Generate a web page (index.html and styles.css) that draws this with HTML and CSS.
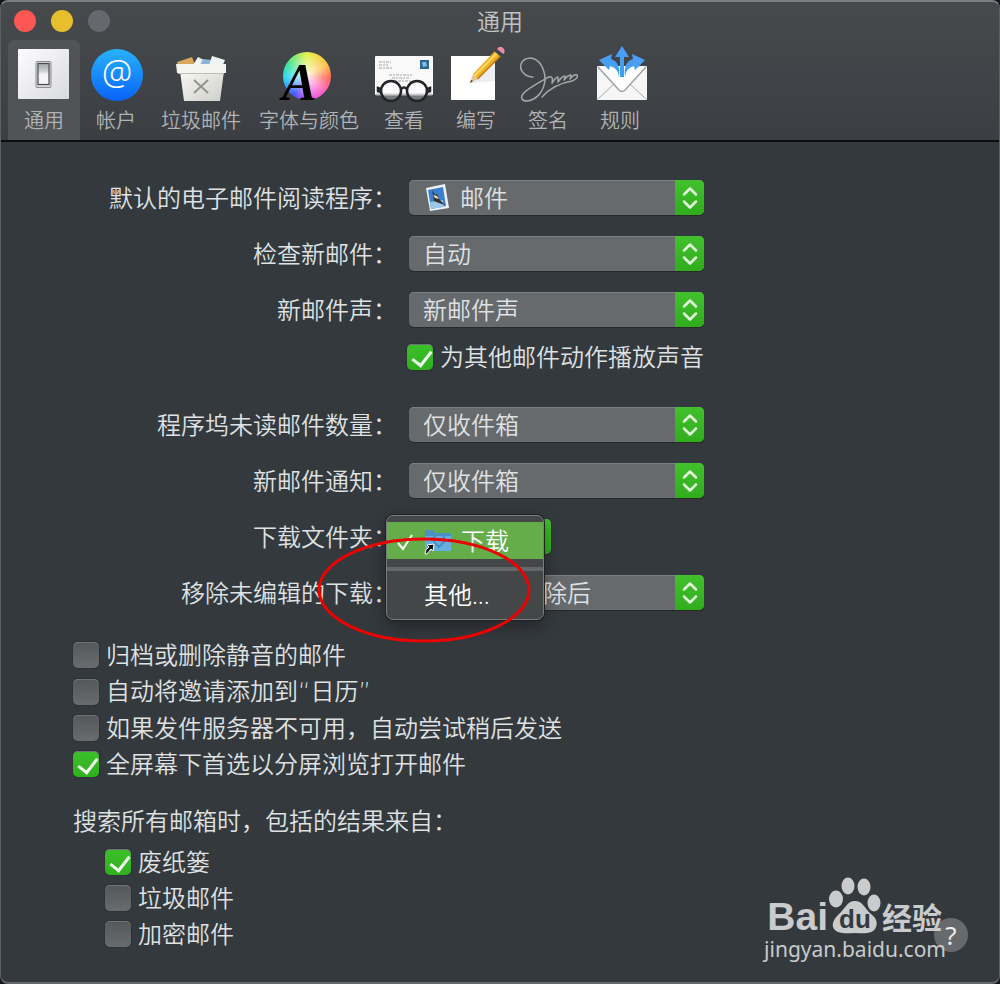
FILE: index.html
```
<!DOCTYPE html>
<html lang="zh-CN">
<head>
  <meta charset="UTF-8">
  <meta name="viewport" content="width=device-width, initial-scale=1.0">
  <title>通用</title>
  <link rel="stylesheet" href="styles.css">
</head>
<body>
  <svg width="0" height="0" class="defs" aria-hidden="true">
    <symbol id="arrows" viewBox="0 0 29 35">
      <path d="M9 14.500l6-6 6 6M9 21.500l6 6 6-6" fill="none" stroke="#e4f8df" stroke-width="2.500" stroke-linecap="round" stroke-linejoin="round"/>
    </symbol>
  </svg>

  <div class="window">
    <header>
      <div class="titlebar">
        <div class="lights">
          <button class="light close" aria-label="关闭"></button>
          <button class="light minimize" aria-label="最小化"></button>
          <button class="light zoom" aria-label="缩放" disabled></button>
        </div>
        <h1>通用</h1>
      </div>

      <nav class="toolbar">
        <button class="tab active">
          <svg class="icon" viewBox="0 0 60 56">
            <defs>
              <linearGradient id="plate" x2="1" y2="1"><stop offset="0" stop-color="#fdfdfe"/><stop offset="1" stop-color="#d9dadf"/></linearGradient>
              <linearGradient id="rocker" x2="0" y2="1"><stop offset="0" stop-color="#a4a6ab"/><stop offset=".4" stop-color="#d3d4d8"/><stop offset=".5" stop-color="#f4f4f6"/></linearGradient>
            </defs>
            <rect x="4" y="3" width="51" height="50" rx="1" fill="url(#plate)"/>
            <rect x="22" y="15.500" width="15" height="26" rx="1" fill="#d5d6da" stroke="#8d8f94"/>
            <rect x="24" y="17.500" width="11" height="21" fill="url(#rocker)" stroke="#4c4d51" stroke-width="1.200"/>
          </svg>
          <span>通用</span>
        </button>
        <button class="tab">
          <svg class="icon" viewBox="0 0 60 56">
            <defs><linearGradient id="blue" x2="0" y2="1"><stop offset="0" stop-color="#26b3fa"/><stop offset="1" stop-color="#0a62fa"/></linearGradient></defs>
            <circle cx="31" cy="29" r="26" fill="url(#blue)"/>
            <text x="31" y="39" class="at">@</text>
          </svg>
          <span>帐户</span>
        </button>
        <button class="tab">
          <svg class="icon" viewBox="0 0 60 56">
            <defs><linearGradient id="bin" x2="1" y2="1"><stop offset="0" stop-color="#f8f8f4"/><stop offset="1" stop-color="#cfcfca"/></linearGradient></defs>
            <path d="M6 16l15-5 3 8-17 2z" fill="#d7a75c"/>
            <path d="M22 19l5-8 6 3-3 6z" fill="#f5f8f8"/>
            <path d="M29 19l3-6 9 1 1 6z" fill="#8ab4d8"/>
            <path d="M38 19l3-9 13 4-3 7z" fill="#eef3f4"/>
            <path d="M9 25h44l-4 30H13z" fill="url(#bin)"/>
            <path d="M5 18h50v9H6z" fill="#f3f3ef"/>
            <path d="M7 27.500h46" stroke="#c1c0b8"/>
            <path d="M23 34l14 13M37 34l-14 13" stroke="#96948c" stroke-width="2"/>
          </svg>
          <span>垃圾邮件</span>
        </button>
        <button class="tab">
          <svg class="icon" viewBox="0 0 60 56">
            <foreignObject x="4" y="6" width="48" height="48"><div class="wheel"></div></foreignObject>
            <text x="3" y="54" class="letter">A</text>
          </svg>
          <span>字体与颜色</span>
        </button>
        <button class="tab">
          <svg class="icon" viewBox="0 0 60 56">
            <rect x="1" y="10" width="58" height="39" rx="1" fill="#f9f9fa"/>
            <path d="M2 48.500h56" stroke="#b5b7ba" stroke-width="2"/>
            <rect x="46" y="14" width="9" height="9" fill="#2c6896"/>
            <path d="M48 16l4 0 1 4-4 1z" fill="#85bde1"/>
            <path d="M5 16h12M5 19h9M5 22h13M15 29h23M18 32h17M17 35h20" stroke="#a0a1a5" stroke-dasharray="3 1 2 1"/>
            <g fill="#ffffff" fill-opacity=".3" stroke="#232427" stroke-width="2.500">
              <circle cx="17" cy="45" r="10"/>
              <circle cx="43" cy="45" r="10"/>
              <path d="M27 43q3-3 6 0M7 43l-3-1v3l3 1M53 43l3-1v3l-3 1" fill="none"/>
            </g>
          </svg>
          <span>查看</span>
        </button>
        <button class="tab">
          <svg class="icon" viewBox="0 0 60 56">
            <rect x="5" y="10" width="44" height="44" fill="#fff"/>
            <path d="M25 37L49 17v18z" fill="#eceef1"/>
            <path d="M24 37l3-9 5 5z" fill="#e5c594"/>
            <path d="M24 37l1-3 2 1z" fill="#333"/>
            <path d="M27 28L49 5l6 5-23 23z" fill="#eeb024"/>
            <path d="M28.500 30L51 7" stroke="#ffd96a" stroke-width="2"/>
            <path d="M31.500 33L54.500 10" stroke="#b97a13" stroke-width="1.500"/>
            <path d="M48.500 5.500l3-3 6 5-3 3z" fill="#42474b"/>
            <path d="M51 3q3-4 6-1t.5 6z" fill="#eb8fa5"/>
          </svg>
          <span>编写</span>
        </button>
        <button class="tab">
          <svg class="icon" viewBox="0 0 60 56">
            <path d="M15 31C7 31 1 24 3 18C5 13 9 12 13 12C21 13 27 22 27 34C26 46 18 54 9 55C4 55 2 52 5 48C9 43 22 36 29 32Q36 28 34 37Q38 31 40 31Q40 33 40 36Q44 30 47 30Q47 32 46 34Q50 29 53 29Q53 31 52 33Q56 28 59 29Q61 32 54 35C42 37 31 43 24 51" fill="none" stroke="#a4a7aa" stroke-width="1.500" stroke-linecap="round" stroke-linejoin="round"/>
          </svg>
          <span>签名</span>
        </button>
        <button class="tab">
          <svg class="icon" viewBox="0 0 60 56">
            <defs><linearGradient id="sky" x2="0" y2="1"><stop offset="0" stop-color="#4f9df7"/><stop offset="1" stop-color="#3aa2ee"/></linearGradient></defs>
            <rect x="7" y="20" width="50" height="34" rx="1" fill="#f6f6f7"/>
            <path d="M8 53l17-16M56 53L39 37" stroke="#a9abaf"/>
            <path d="M8 21l21 23q3 3 6 0L56 21" fill="#fff" stroke="#9fa1a5" stroke-width="1.500"/>
            <g fill="url(#sky)">
              <path d="M30 31V11h-5l7-11 7 11h-5v20z"/>
              <path d="M29 31q-1-9-9-11l-1 4L9 14l13-6-1 5q10 3 8 18z"/>
              <path d="M35 31q1-9 9-11l1 4 10-10-13-6 1 5q-10 3-8 18z"/>
            </g>
          </svg>
          <span>规则</span>
        </button>
      </nav>
    </header>

    <main>
      <div class="rows">
        <div class="row">
          <label for="reader">默认的电子邮件阅读程序：</label>
          <div class="select with-icon">
            <select id="reader"><option>邮件</option></select>
            <svg class="stamp" viewBox="0 0 26 30">
              <path d="M2 5l19-4 4 24-19 3z" fill="#eef3f8"/>
              <path d="M4 7l15-3 3 19-15 3z" fill="#3a7fcb"/>
              <path d="M6 19l13-2 1 7-13 2z" fill="#9cc7e8"/>
              <path d="M8 7l3 5 2-1 2 5 6 6-6-2-5-2-1-6z" fill="#33302c"/>
              <path d="M9 12l4 1 2 3-4-1z" fill="#e9dfc2"/>
            </svg>
            <svg class="arrows"><use href="#arrows"/></svg>
          </div>
        </div>
        <div class="row">
          <label for="check">检查新邮件：</label>
          <div class="select">
            <select id="check"><option>自动</option></select>
            <svg class="arrows"><use href="#arrows"/></svg>
          </div>
        </div>
        <div class="row">
          <label for="sound">新邮件声：</label>
          <div class="select">
            <select id="sound"><option>新邮件声</option></select>
            <svg class="arrows"><use href="#arrows"/></svg>
          </div>
        </div>
      </div>

      <label class="check play-sound"><input type="checkbox" checked>为其他邮件动作播放声音</label>

      <div class="rows">
        <div class="row">
          <label for="dock">程序坞未读邮件数量：</label>
          <div class="select">
            <select id="dock"><option>仅收件箱</option></select>
            <svg class="arrows"><use href="#arrows"/></svg>
          </div>
        </div>
        <div class="row">
          <label for="notify">新邮件通知：</label>
          <div class="select">
            <select id="notify"><option>仅收件箱</option></select>
            <svg class="arrows"><use href="#arrows"/></svg>
          </div>
        </div>
        <div class="row">
          <label for="folder">下载文件夹：</label>
          <div class="select short">
            <select id="folder"><option>下载</option></select>
            <svg class="arrows"><use href="#arrows"/></svg>
            <div class="menu" role="menu">
              <button class="menu-item selected" role="menuitem">
                <svg class="tick" viewBox="0 0 20 20"><path d="M2 11l5 6L16 3" fill="none" stroke="#fff" stroke-width="2"/></svg>
                <svg class="folder" viewBox="0 0 28 26">
                  <path d="M1 3q0-2 2-2h6l2 3h15q1 0 1 1v16q0 1-1 1H2q-1 0-1-1z" fill="#4b91c6"/>
                  <path d="M1 7h26v14q0 1-1 1H2q-1 0-1-1z" fill="#66aedb"/>
                  <path d="M11 7a6 6 0 0 0-1 6l5 5 5-5a6 6 0 0 0-1-6" fill="none" stroke="#4a8fc4" stroke-width="2"/>
                  <path d="M1 25q0-5 4-7l-2-2 7-1-1 7-2-2q-2 2-4 5z" fill="#111" stroke="#fff"/>
                </svg>
                下载
              </button>
              <hr>
              <button class="menu-item" role="menuitem">其他...</button>
            </div>
            <svg class="ring" viewBox="0 0 216 106"><ellipse cx="108" cy="53" rx="105" ry="51" fill="none" stroke="#ea0303" stroke-width="3"/></svg>
          </div>
        </div>
        <div class="row">
          <label for="remove">移除未编辑的下载：</label>
          <div class="select">
            <select id="remove"><option>在邮件被删除后</option></select>
            <svg class="arrows"><use href="#arrows"/></svg>
          </div>
        </div>
      </div>

      <div class="checks">
        <label class="check"><input type="checkbox">归档或删除静音的邮件</label>
        <label class="check"><input type="checkbox"><span>自动将邀请添加到<span class="quote">“</span>日历<span class="quote">”</span></span></label>
        <label class="check"><input type="checkbox">如果发件服务器不可用，自动尝试稍后发送</label>
        <label class="check"><input type="checkbox" checked>全屏幕下首选以分屏浏览打开邮件</label>
      </div>

      <div class="bottom">
        <div>
          <p>搜索所有邮箱时，包括的结果来自：</p>
          <div class="checks nested">
            <label class="check"><input type="checkbox" checked>废纸篓</label>
            <label class="check"><input type="checkbox">垃圾邮件</label>
            <label class="check"><input type="checkbox">加密邮件</label>
          </div>
        </div>
        <button class="help">?</button>
      </div>
    </main>

    <div class="watermark">
      <div class="brand">
        <span class="bai">Bai</span>
        <svg class="paw" viewBox="0 0 54 58">
          <g fill="#c9cbcd">
            <ellipse cx="8" cy="22" rx="7" ry="8.500"/>
            <ellipse cx="20" cy="9" rx="6.500" ry="8.500"/>
            <ellipse cx="36" cy="10" rx="6.500" ry="8.500"/>
            <ellipse cx="46" cy="26" rx="6.500" ry="8.500"/>
            <path d="M27 24c8 0 10 8 16 13 5 4 7 8 5 13-2 6-9 7-21 6-12 1-20 0-22-6-1-5 2-9 6-13 6-5 8-13 16-13z"/>
          </g>
          <text x="27" y="51" class="du">du</text>
        </svg>
        <span class="jingyan">经验</span>
      </div>
      <div class="url">jingyan.baidu.com</div>
    </div>
  </div>
</body>
</html>
```
FILE: styles.css
```
* {
  box-sizing: border-box;
}
body {
  margin: 0;
  background: #14161e;
  color: #dfe1e3;
  font-family: "Noto Sans", "Noto Sans CJK SC", sans-serif;
  font-size: 24px;
  font-weight: 350;
  line-height: 26px;
}
button, select {
  font: inherit;
  color: inherit;
  border: none;
  padding: 0;
}
.defs {
  position: absolute;
}
.window {
  position: relative;
  min-height: 100vh;
  background: #34393d;
  border: 1px solid #5c6063;
  border-top: 2px solid #7b7f82;
  border-bottom: 2px solid #68696e;
  border-radius: 8px;
  overflow: hidden;
}

/* title bar and toolbar */
header {
  background: linear-gradient(#464a4d, #3b3e42);
  border-bottom: 2px solid #0d0e10;
}
.titlebar {
  position: relative;
  height: 38px;
  display: flex;
  align-items: center;
  justify-content: center;
}
.lights {
  position: absolute;
  left: 13px;
  display: flex;
  gap: 15px;
}
.light {
  width: 22px;
  height: 22px;
  border-radius: 50%;
}
.close {
  background: #fc5753;
}
.minimize {
  background: #e5bf2c;
}
.zoom {
  background: #65686c;
}
h1 {
  margin: 0;
  font-size: 23px;
  font-weight: 350;
  color: #c0c3c5;
}
.toolbar {
  display: flex;
  padding-left: 7px;
}
.tab {
  min-width: 72px;
  padding: 6px 9px 5px;
  display: flex;
  flex-direction: column;
  align-items: center;
  gap: 5px;
  background: none;
  color: #b0b3b6;
  font-size: 20px;
  line-height: 28px;
}
.tab.active {
  background: #505457;
  border-radius: 6px 6px 0 0;
}
.icon {
  width: 60px;
  height: 56px;
  margin: 0 -4px;
  overflow: visible;
}
.at {
  font-family: "Noto Sans", sans-serif;
  font-size: 34px;
  fill: #fff;
  text-anchor: middle;
}
.wheel {
  width: 48px;
  height: 48px;
  border-radius: 50%;
  background:
    radial-gradient(rgba(255,255,255,0.9), rgba(255,255,255,0) 65%),
    conic-gradient(#e4f04a, #ffc04a 60deg, #ff6a5c 95deg, #ff65b8 130deg, #e35cf5 175deg, #4a55ff 215deg, #30d8f5 265deg, #3be59a 300deg, #e4f04a);
}
.letter {
  font: italic bold 52px "Liberation Serif", serif;
  fill: #000;
}

/* settings form */
main {
  padding: 38px 31px 28px 72px;
}
.rows {
  display: flex;
  flex-direction: column;
  gap: 21px;
}
.row {
  display: flex;
  align-items: center;
  gap: 12px;
}
.row > label {
  width: 324px;
  text-align: right;
  white-space: nowrap;
}
.select {
  position: relative;
  width: 295px;
  height: 35px;
}
.select.short {
  width: 142px;
}
.select select {
  appearance: none;
  width: 100%;
  height: 35px;
  padding: 0 34px 0 14px;
  background: #666a6d;
  border-radius: 5px;
  box-shadow: inset 0 1px #7d8083, 0 1px 1px #26292c;
}
.select.with-icon select {
  padding-left: 51px;
}
.stamp {
  position: absolute;
  left: 15px;
  top: 3px;
  width: 26px;
  height: 30px;
}
.arrows {
  position: absolute;
  right: 0;
  top: 0;
  width: 29px;
  height: 35px;
  background: linear-gradient(#43c02d, #2fad1c);
  border-radius: 0 5px 5px 0;
  pointer-events: none;
}
.check {
  display: flex;
  align-items: center;
  gap: 7px;
}
.check input {
  appearance: none;
  position: relative;
  flex: none;
  width: 26px;
  height: 26px;
  margin: 0;
  border-radius: 5px;
  background: linear-gradient(#54585b, #686c6f);
  box-shadow: inset 0 1px #707376, 0 0 2px #222528;
}
.check input:checked {
  background: linear-gradient(#3cc02a, #2fb01d);
}
.check input:checked::after {
  content: "";
  position: absolute;
  left: 9px;
  top: 3px;
  width: 9px;
  height: 16px;
  border: solid #f0fbee;
  border-width: 0 3px 3px 0;
  transform: rotate(38deg);
}
.quote {
  font-family: "DejaVu Sans", sans-serif;
}
.play-sound {
  margin: 17px 0 37px 334px;
}
.checks {
  display: flex;
  flex-direction: column;
  gap: 10px;
  margin-top: 32px;
}
.checks.nested {
  margin: 15px 0 5px 32px;
}
.bottom {
  display: flex;
  justify-content: space-between;
  align-items: flex-end;
  margin-top: 31px;
}
.bottom p {
  margin: 0;
}
.help {
  width: 34px;
  height: 34px;
  border-radius: 50%;
  background: #666a6d;
  color: #eceded;
  font-size: 26px;
  font-weight: 400;
}

/* pop-up menu */
.menu {
  position: absolute;
  z-index: 1;
  left: -23px;
  top: -4px;
  width: 158px;
  height: 105px;
  padding: 6px 0;
  background: #434748;
  border: 1px solid #7a7d7e;
  border-radius: 7px;
  box-shadow: 0 0 0 1px #1f2123, 0 6px 18px rgba(0,0,0,0.35);
}
.menu-item {
  position: relative;
  display: block;
  width: 100%;
  height: 37px;
  padding-left: 37px;
  background: none;
  color: #fff;
  text-align: left;
}
.menu-item.selected {
  padding-left: 74px;
  background: #65ad4b;
}
.menu hr {
  height: 4px;
  margin: 8px 0 5px;
  border: none;
  background: #65686a;
}
.tick {
  position: absolute;
  left: 9px;
  top: 10px;
  width: 20px;
  height: 20px;
}
.folder {
  position: absolute;
  left: 37px;
  top: 7px;
  width: 28px;
  height: 26px;
}
.ring {
  position: absolute;
  z-index: 2;
  left: -93px;
  top: 18px;
  width: 216px;
  height: 106px;
  pointer-events: none;
}

/* watermark in the corner */
.watermark {
  position: absolute;
  right: 53px;
  bottom: 19px;
  color: #c9cbcd;
  pointer-events: none;
}
.brand {
  display: flex;
  align-items: flex-end;
  justify-content: flex-end;
  padding-right: 4px;
}
.bai {
  font: bold 39px/36px "Liberation Sans", sans-serif;
}
.paw {
  width: 54px;
  height: 58px;
}
.du {
  font: bold 26px "Liberation Sans", sans-serif;
  fill: #34393d;
  text-anchor: middle;
}
.jingyan {
  font-size: 30px;
  font-weight: 700;
  line-height: 34px;
}
.url {
  font-size: 21px;
  font-weight: 400;
  line-height: 28px;
}
```
